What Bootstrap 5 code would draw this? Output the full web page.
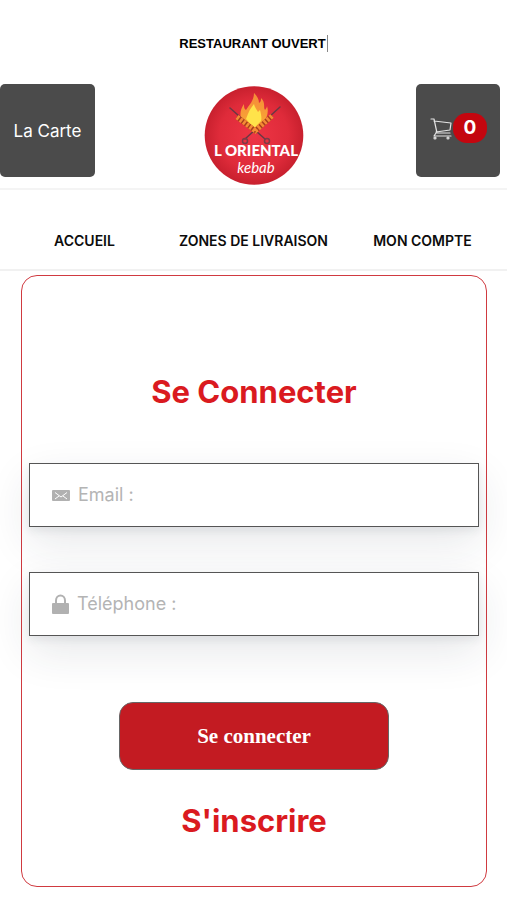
<!DOCTYPE html>
<html lang="fr">
<head>
<meta charset="utf-8">
<meta name="viewport" content="width=device-width, initial-scale=1">
<title>L Oriental Kebab</title>
<link href="https://cdn.jsdelivr.net/npm/bootstrap@5.3.0/dist/css/bootstrap.min.css" rel="stylesheet">
<style>
body { font-family: Inter, "Liberation Sans", sans-serif; background: #fff; color: #000; }
.status-line { font: 700 13px/18px "Liberation Sans", sans-serif; padding-top: 35px; padding-bottom: 31px; }
.status-line span { border-right: 1px solid #888; padding: 1px 1px 1px 0; }
.top-bar { display: grid; grid-template-columns: 1fr auto 1fr; border-bottom: 2px solid #f4f4f4; padding-bottom: 3px; }
.tile { height: 93px; background: #4b4b4b; color: #fff; border-radius: 5px; font-size: 17px; line-height: 24px; }
.tile:hover { color: #fff; background: #3d3d3d; }
.tile-menu { width: 95px; }
.tile-cart { width: 84px; margin-right: 7px; padding-bottom: 5px; }
.tile-cart .count { background: #c4060f; width: 34px; height: 30px; border-radius: 14px; font-weight: 700; font-size: 19px; line-height: 30px; }
.logo { margin-top: 1px; }
.main-nav { padding: 38px 0 16px; border-bottom: 2px solid #f1f1f1; }
.main-nav a { color: #0c0c0c; font-weight: 600; font-size: 14px; line-height: 24px; }
.login-box { margin: 4px 20px 14px 21px; border: 1px solid #d03a40; border-radius: 16px; padding: 92px 7px 42px; }
.title { font-size: 31px; line-height: 47px; font-weight: 700; color: #da1a20; }
.title a { color: inherit; }
.field { height: 64px; border: 1px solid #555; background: #fff; padding-left: 22px; margin-bottom: 45px; box-shadow: 0 16px 44px rgba(40, 50, 65, .11), 0 4px 8px rgba(40, 50, 65, .08); }
.field svg { display: block; color: #b1b1b1; }
.field input { font-size: 18px; line-height: 26px; background: none; padding: 0 8px; }
.field input:focus { box-shadow: none; background: none; }
.field input::placeholder { color: #b4b4b4; opacity: 1; }
.submit { width: 60%; height: 68px; margin-top: 21px; margin-bottom: 27px; background: #c31b22; border: 1px solid #666; border-radius: 14px; color: #fff; font: 700 21px/28px "Liberation Serif", serif; }
.submit:hover { background: #a8151b; color: #fff; }
</style>
</head>
<body>
<div class="status-line text-center"><span>RESTAURANT OUVERT</span></div>
<header class="top-bar">
  <div><a href="#carte" class="tile tile-menu d-flex align-items-center justify-content-center text-decoration-none">La Carte</a></div>
  <a href="#" class="logo" aria-label="L Oriental Kebab">
    <svg class="d-block" width="100" height="100" viewBox="0 0 100 100">
      <defs>
        <radialGradient id="disc"><stop offset="0" stop-color="#ee3545"/><stop offset=".7" stop-color="#df2b3a"/><stop offset="1" stop-color="#c8202e"/></radialGradient>
        <linearGradient id="fire" x1="0" y1="0" x2="0" y2="1"><stop offset="0" stop-color="#f58a38"/><stop offset="1" stop-color="#f9ae35"/></linearGradient>
      </defs>
      <circle cx="50" cy="50.500" r="49.300" fill="url(#disc)"/>
      <path d="M39 38C35 31 36 25 40 19c0 3 0 5 2 6 3-5 8-9 8-17 3 3 5 6 5 10 2-1 2-3 2-5 5 5 2 9 4 12 1-1 2-3 2-4 2 6 0 12-4 18l-9 9z" fill="url(#fire)"/>
      <path d="M42 34c2-5 3-9 8-15 1 4 3 6 4 8l2-2c1 4 2 8 1 11l-7 7z" fill="#ffe34a"/>
      <g fill="none" stroke-linecap="round">
        <path d="M26 23 61 54M76 22 41 54" stroke="#6b3843" stroke-width="1.500"/>
        <circle cx="41" cy="56" r="2.500" stroke="#7b3d48" stroke-width="1.500"/>
        <circle cx="63" cy="56" r="2.500" stroke="#7b3d48" stroke-width="1.500"/>
        <path d="M33 32 53 47M68 31 50 47" stroke="#a83f1b" stroke-width="5" stroke-linecap="butt"/>
        <path d="M33 32 53 47M68 31 50 47" stroke="#f58a35" stroke-width="5" stroke-linecap="butt" stroke-dasharray="2.500 1.500"/>
      </g>
      <text x="52" y="71" text-anchor="middle" font-family="Lato, sans-serif" font-weight="900" font-size="15" fill="#fff">L ORIENTAL</text>
      <text x="52" y="88" text-anchor="middle" font-family="Lato, sans-serif" font-style="italic" font-size="15" fill="#fff">kebab</text>
    </svg>
  </a>
  <div class="d-flex justify-content-end">
    <a href="#panier" class="tile tile-cart d-flex align-items-center justify-content-center text-decoration-none" aria-label="Panier">
      <svg width="24" height="24" viewBox="0 0 24 24" fill="none" stroke="#e4e4e4" stroke-width="1.200" stroke-linejoin="round" stroke-linecap="round"><path d="M2 3h3l3 14h13M5 5l17 2-1 7-14 2M7 17l-2 3h17"/><circle cx="6" cy="22" r="1"/><circle cx="19" cy="22" r="1"/></svg>
      <span class="count text-center">0</span>
    </a>
  </div>
</header>
<nav class="main-nav">
  <div class="row g-0 text-center">
    <div class="col-4"><a href="#accueil" class="text-decoration-none">ACCUEIL</a></div>
    <div class="col-4"><a href="#zones" class="text-decoration-none text-nowrap">ZONES DE LIVRAISON</a></div>
    <div class="col-4"><a href="#compte" class="text-decoration-none">MON COMPTE</a></div>
  </div>
</nav>
<main class="login-box text-center">
  <h1 class="title mb-5">Se Connecter</h1>
  <form>
    <div class="field d-flex align-items-center">
      <label for="email" aria-label="Email">
        <svg width="18" height="18" viewBox="0 0 18 18"><rect y="4" width="18" height="11" rx="1" fill="currentColor"/><path d="M3 6.500 9 11l6-4.500M3 13l4-3M15 13l-4-3" fill="none" stroke="#fff" stroke-width="1"/></svg>
      </label>
      <input id="email" type="email" class="form-control border-0" placeholder="Email :">
    </div>
    <div class="field d-flex align-items-center">
      <label for="phone" aria-label="Téléphone">
        <svg width="17" height="20" viewBox="0 0 17 20"><path d="M4 10V6.500a4.500 5 0 0 1 9 0V10" fill="none" stroke="currentColor" stroke-width="2"/><rect y="9" width="17" height="11" rx="1" fill="currentColor"/></svg>
      </label>
      <input id="phone" type="tel" class="form-control border-0" placeholder="Téléphone :">
    </div>
    <button type="submit" class="btn submit">Se connecter</button>
  </form>
  <h2 class="title mb-0"><a href="#inscription" class="text-decoration-none">S'inscrire</a></h2>
</main>
<script src="https://cdn.jsdelivr.net/npm/bootstrap@5.3.0/dist/js/bootstrap.bundle.min.js"></script>
</body>
</html>
